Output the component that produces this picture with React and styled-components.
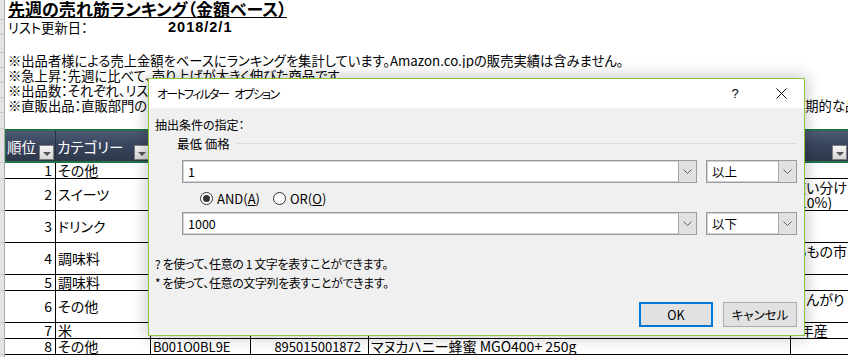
import styled, { createGlobalStyle } from 'styled-components';

const GlobalStyle = createGlobalStyle`
  html, body { margin: 0; padding: 0; background: #fff; }
`;

/* ---------- sheet ---------- */

const Sheet = styled.div`
  position: relative;
  width: 848px;
  height: 357px;
  overflow: hidden;
  background: #fff;
  color: #000;
  font-family: "Noto Sans CJK JP", "Noto Sans", sans-serif;
  font-feature-settings: "palt";
  font-size: 13.3px;
`;

const Row = styled.div`
  display: flex;
  height: ${(p) => p.$h}px;
`;

const RowHead = styled.div`
  flex: 0 0 5px;
  box-sizing: border-box;
  background: #e3e3e3;
  border-right: 1px solid #a9a9a9;
  border-bottom: 1px solid #c8c8c8;
`;

const Line = styled.div`
  flex: 1;
  display: flex;
  align-items: ${(p) => p.$align || 'center'};
  padding-left: 3px;
  white-space: nowrap;
  overflow: hidden;
  line-height: 15px;
`;

const Title = styled.span`
  font-size: 17px;
  line-height: 18px;
  font-weight: bold;
  text-decoration: underline;
  text-underline-offset: 1px;
`;

const DateLabel = styled.span`
  width: 160px;
`;

const DateValue = styled.span`
  font-family: "Liberation Sans", Arial, sans-serif;
  font-weight: bold;
  font-size: 14.5px;
  letter-spacing: 1px;
`;

const NoteTail = styled.span`
  margin-left: auto;
  width: 56px;
  overflow: hidden;
`;

const HeaderCells = styled.div`
  flex: 1;
  display: flex;
  border-top: 2px solid #217346;
  border-bottom: 2px solid #217346;
  border-left: 1px solid #217346;
  background: linear-gradient(to bottom, #4b5a73 0%, #3a4660 45%, #2e3849 100%);
  color: #fff;
  font-size: 14.5px;
`;

const HeaderCell = styled.div`
  flex: 0 0 ${(p) => p.$w}px;
  box-sizing: border-box;
  display: flex;
  align-items: center;
  padding-left: 1px;
  border-left: ${(p) => (p.$first ? 'none' : '1px solid #26303f')};
  white-space: nowrap;
  overflow: hidden;
`;

const FilterButton = styled.span`
  align-self: flex-end;
  margin: 0 1px 1px auto;
  width: 15px;
  height: 15px;
  box-sizing: border-box;
  flex: none;
  border: 1px solid #7b7b7b;
  background: linear-gradient(to bottom, #f6f6f6, #d6d6d6);
  display: flex;
  align-items: center;
  justify-content: center;
  &::after {
    content: '';
    border-left: 4px solid transparent;
    border-right: 4px solid transparent;
    border-top: 4px solid #555;
    margin-top: 2px;
  }
`;

const DataCells = styled.div`
  flex: 1;
  display: flex;
  border-bottom: 1px solid #000;
  font-size: 14px;
`;

const Cell = styled.div`
  flex: 0 0 ${(p) => p.$w}px;
  box-sizing: border-box;
  display: flex;
  flex-direction: column;
  justify-content: center;
  align-items: ${(p) => (p.$right ? 'flex-end' : 'flex-start')};
  padding: ${(p) => (p.$right ? `0 ${p.$pr ?? 3}px 0 0` : '0 0 0 2px')};
  border-left: ${(p) => (p.$first ? 'none' : '1px solid #000')};
  white-space: nowrap;
  overflow: hidden;
  line-height: 15px;
`;

const Code = styled.span`
  font-size: 13px;
`;

const TailLine = styled.span`
  display: block;
  margin-left: ${(p) => p.$x || 0}px;
`;

/* ---------- dialog ---------- */

const Dialog = styled.div`
  position: absolute;
  left: 148px;
  top: 78px;
  width: 657px;
  height: 258px;
  box-sizing: border-box;
  border: 1px solid #8dc53e;
  background: #f0f0f0;
  box-shadow: 0 0 14px 2px rgba(0, 0, 0, 0.22);
  display: flex;
  flex-direction: column;
  font-size: 12px;
  color: #000;
`;

const TitleBar = styled.div`
  height: 29px;
  flex: none;
  background: #fff;
  display: flex;
  align-items: center;
  padding-left: 8px;
`;

const TitleText = styled.span`
  letter-spacing: -1.7px;
  word-spacing: 5px;
`;

const CaptionButton = styled.span`
  width: 46px;
  height: 29px;
  display: flex;
  align-items: center;
  justify-content: center;
  margin-left: ${(p) => (p.$push ? 'auto' : '0')};
  font-family: "Liberation Sans", Arial, sans-serif;
  font-size: 13px;
`;

const Body = styled.div`
  flex: 1;
  display: flex;
  flex-direction: column;
  padding: 9px 7px 0 6px;
`;

const Label = styled.div`
  line-height: 16px;
  height: 16px;
`;

const GroupHead = styled.div`
  display: flex;
  align-items: center;
  height: 16px;
  margin-top: 2px;
  padding-left: 22px;
  font-size: 12.5px;
  &::after {
    content: '';
    flex: 1;
    height: 1px;
    margin-left: 7px;
    background: #dcdcdc;
  }
`;

const ConditionRow = styled.div`
  display: flex;
  gap: 9px;
  height: 23px;
  margin-top: ${(p) => p.$mt}px;
  padding-left: 27px;
`;

const ComboBox = styled.div`
  box-sizing: border-box;
  height: 23px;
  ${(p) => (p.$width ? `flex: 0 0 ${p.$width}px;` : 'flex: 1;')}
  display: flex;
  background: #fff;
  border: 1px solid #9c9c9c;
  box-shadow: inset 0 0 0 1px #d2d2d2;
`;

const ComboText = styled.span`
  flex: 1;
  padding-left: 5px;
  line-height: 21px;
  font-size: 12.5px;
`;

const ComboButton = styled.span`
  width: 17px;
  flex: none;
  background: #e1e1e1;
  border-left: 1px solid #a8a8a8;
  display: flex;
  align-items: center;
  justify-content: center;
`;

const RadioRow = styled.div`
  display: flex;
  align-items: center;
  height: 22px;
  margin-top: 4px;
  padding-left: 45px;
  gap: 13px;
  font-size: 13px;
`;

const RadioOption = styled.span`
  display: flex;
  align-items: center;
  gap: 4px;
`;

const RadioCircle = styled.span`
  width: 13px;
  height: 13px;
  box-sizing: border-box;
  border: 1px solid #333;
  border-radius: 50%;
  background: #fff;
  display: flex;
  align-items: center;
  justify-content: center;
  &::after {
    content: '';
    width: 7px;
    height: 7px;
    border-radius: 50%;
    background: ${(p) => (p.$checked ? '#333' : 'transparent')};
  }
`;

const Hint = styled.div`
  line-height: 19px;
  letter-spacing: -0.4px;
  margin-top: ${(p) => p.$mt || 0}px;
`;

const ButtonRow = styled.div`
  display: flex;
  justify-content: flex-end;
  gap: 10px;
  margin-top: 10px;
`;

const Button = styled.button`
  width: 74px;
  height: 25px;
  box-sizing: border-box;
  padding: 0;
  background: #e1e1e1;
  border: ${(p) => (p.$primary ? '2px solid #0078d7' : '1px solid #adadad')};
  font: inherit;
  font-size: 12.5px;
  font-feature-settings: "palt";
  color: #000;
`;

/* ---------- data ---------- */

const columns = [
  { key: 'rank', w: 50, label: '順位' },
  { key: 'cat', w: 95, label: 'カテゴリー' },
  { key: 'asin', w: 100, label: 'ASIN' },
  { key: 'jan', w: 118, label: 'JAN' },
  { key: 'name', w: 422, label: '商品名' },
  { key: 'tail', w: 58, label: '' },
];

const rows = [
  { h: 16, rank: 1, cat: 'その他', tail: [] },
  { h: 32, rank: 2, cat: 'スイーツ', tail: [{ t: '使い分け', x: -1 }, { t: '10%)', x: 6 }] },
  { h: 32, rank: 3, cat: 'ドリンク', tail: [] },
  { h: 32, rank: 4, cat: '調味料', tail: [{ t: 'いもの市', x: 0 }, { t: '' }] },
  { h: 16, rank: 5, cat: '調味料', tail: [] },
  { h: 32, rank: 6, cat: 'その他', tail: [{ t: 'こんがり', x: 1 }, { t: '' }] },
  { h: 16, rank: 7, cat: '米', tail: [{ t: '9年産', x: -1 }] },
  {
    h: 16,
    rank: 8,
    cat: 'その他',
    asin: 'B001O0BL9E',
    jan: '895015001872',
    name: 'マヌカハニー蜂蜜 MGO400+ 250g',
    tail: [],
  },
];

const notes = [
  '※出品者様による売上金額をベースにランキングを集計しています。Amazon.co.jpの販売実績は含みません。',
  '※急上昇：先週に比べて、売り上げが大きく伸びた商品です',
  '※出品数：それぞれ、リストの商品を出品している出品者数です',
  '※直販出品：直販部門の出品です。',
];

function Chevron() {
  return (
    <svg width="9" height="5" viewBox="0 0 9 5">
      <polyline points="0.5,0.5 4.5,4.5 8.5,0.5" fill="none" stroke="#606060" strokeWidth="1" />
    </svg>
  );
}

function Combo({ value, width }) {
  return (
    <ComboBox $width={width}>
      <ComboText>{value}</ComboText>
      <ComboButton>
        <Chevron />
      </ComboButton>
    </ComboBox>
  );
}

function FilterDialog() {
  return (
    <Dialog>
      <TitleBar>
        <TitleText>オートフィルター オプション</TitleText>
        <CaptionButton $push>?</CaptionButton>
        <CaptionButton>
          <svg width="11" height="11" viewBox="0 0 11 11">
            <path d="M0.5 0.5 L10.5 10.5 M10.5 0.5 L0.5 10.5" stroke="#111" strokeWidth="1" />
          </svg>
        </CaptionButton>
      </TitleBar>
      <Body>
        <Label>抽出条件の指定：</Label>
        <GroupHead>最低 価格</GroupHead>
        <ConditionRow $mt={9}>
          <Combo value="1" />
          <Combo value="以上" width={91} />
        </ConditionRow>
        <RadioRow>
          <RadioOption>
            <RadioCircle $checked />
            <span>
              AND(<u>A</u>)
            </span>
          </RadioOption>
          <RadioOption>
            <RadioCircle />
            <span>
              OR(<u>O</u>)
            </span>
          </RadioOption>
        </RadioRow>
        <ConditionRow $mt={3}>
          <Combo value="1000" />
          <Combo value="以下" width={91} />
        </ConditionRow>
        <Hint $mt={19}>? を使って、任意の 1 文字を表すことができます。</Hint>
        <Hint>* を使って、任意の文字列を表すことができます。</Hint>
        <ButtonRow>
          <Button $primary>OK</Button>
          <Button>キャンセル</Button>
        </ButtonRow>
      </Body>
    </Dialog>
  );
}

export default function App() {
  return (
    <>
      <GlobalStyle />
      <Sheet>
        <Row $h={20}>
          <RowHead />
          <Line $align="flex-start">
            <Title>先週の売れ筋ランキング（金額ベース）</Title>
          </Line>
        </Row>
        <Row $h={15}>
          <RowHead />
          <Line>
            <DateLabel>リスト更新日：</DateLabel>
            <DateValue>2018/2/1</DateValue>
          </Line>
        </Row>
        <Row $h={18}>
          <RowHead />
          <Line />
        </Row>
        {notes.map((n, i) => (
          <Row $h={15} key={i}>
            <RowHead />
            <Line>
              {n}
              {i === 3 && <NoteTail>定期的な品揃え</NoteTail>}
            </Line>
          </Row>
        ))}
        <Row $h={16}>
          <RowHead />
          <Line />
        </Row>
        <Row $h={34}>
          <RowHead />
          <HeaderCells>
            {columns.map((c, i) => (
              <HeaderCell key={c.key} $w={i === 0 ? c.w - 1 : c.w} $first={i === 0}>
                {c.label}
                <FilterButton />
              </HeaderCell>
            ))}
          </HeaderCells>
        </Row>
        {rows.map((r) => (
          <Row $h={r.h} key={r.rank}>
            <RowHead />
            <DataCells>
              <Cell $w={50} $first $right>
                {r.rank}
              </Cell>
              <Cell $w={95}>{r.cat}</Cell>
              <Cell $w={100}>
                <Code>{r.asin}</Code>
              </Cell>
              <Cell $w={118} $right $pr={7}>
                <Code>{r.jan}</Code>
              </Cell>
              <Cell $w={422}>{r.name}</Cell>
              <Cell $w={58}>
                {r.tail.map((l, i) => (
                  <TailLine key={i} $x={l.x}>
                    {l.t || '\u00a0'}
                  </TailLine>
                ))}
              </Cell>
            </DataCells>
          </Row>
        ))}
        <Row $h={10}>
          <RowHead />
          <Line />
        </Row>
        <FilterDialog />
      </Sheet>
    </>
  );
}
